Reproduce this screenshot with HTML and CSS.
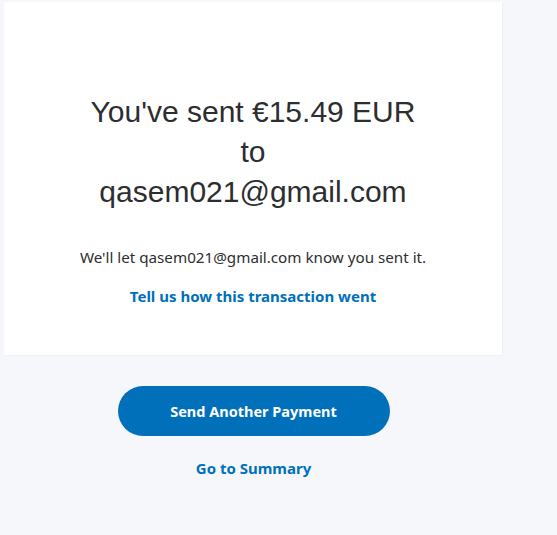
FILE: index.html
```html
<!DOCTYPE html>
<html lang="en">
<head>
<meta charset="utf-8">
<title>Payment sent</title>
<link rel="stylesheet" href="styles.css">
</head>
<body>
<main class="page">
  <section class="card">
    <h1 class="headline">You've sent €15.49 EUR<br>to<br>qasem021@gmail.com</h1>
    <p class="note">We'll let qasem021@gmail.com know you sent it.</p>
    <a class="feedback" href="#">Tell us how this transaction went</a>
  </section>
  <div class="actions">
    <a class="primary-btn" href="#">Send Another Payment</a>
    <a class="summary-link" href="#">Go to Summary</a>
  </div>
</main>
</body>
</html>
```
FILE: styles.css
```css
html, body {
  margin: 0;
  padding: 0;
  background: #f5f7fa;
}
body {
  font-family: "Noto Sans", "Open Sans", sans-serif;
  color: #2c2e2f;
}
.page {
  width: 499px;
  padding: 2px 0 0 4px;
}
.card {
  background: #ffffff;
  border: 1px solid #eef0f2;
  border-top: 0;
  border-left: 0;
  height: 354px;
  box-sizing: border-box;
  padding-top: 90px;
  display: flex;
  flex-direction: column;
  align-items: center;
}
.headline {
  margin: 0;
  font-family: "Liberation Sans", Arial, sans-serif;
  font-weight: 400;
  font-size: 30px;
  line-height: 40px;
  text-align: center;
  color: #2c2e2f;
}
.note {
  margin: 34px 0 0;
  font-size: 15.2px;
  line-height: 22px;
  color: #2c2e2f;
}
.feedback {
  margin-top: 17px;
  font-size: 15px;
  line-height: 22px;
  font-weight: 700;
  color: #0070ba;
  text-decoration: none;
}
.actions {
  display: flex;
  flex-direction: column;
  align-items: center;
  padding-top: 30px;
}
.primary-btn {
  display: flex;
  align-items: center;
  justify-content: center;
  width: 272px;
  height: 50px;
  border-radius: 25px;
  background: #0070ba;
  color: #ffffff;
  font-size: 14.5px;
  font-weight: 700;
  text-decoration: none;
}
.summary-link {
  margin-top: 21px;
  font-size: 15px;
  line-height: 22px;
  font-weight: 700;
  color: #0070ba;
  text-decoration: none;
}
```
